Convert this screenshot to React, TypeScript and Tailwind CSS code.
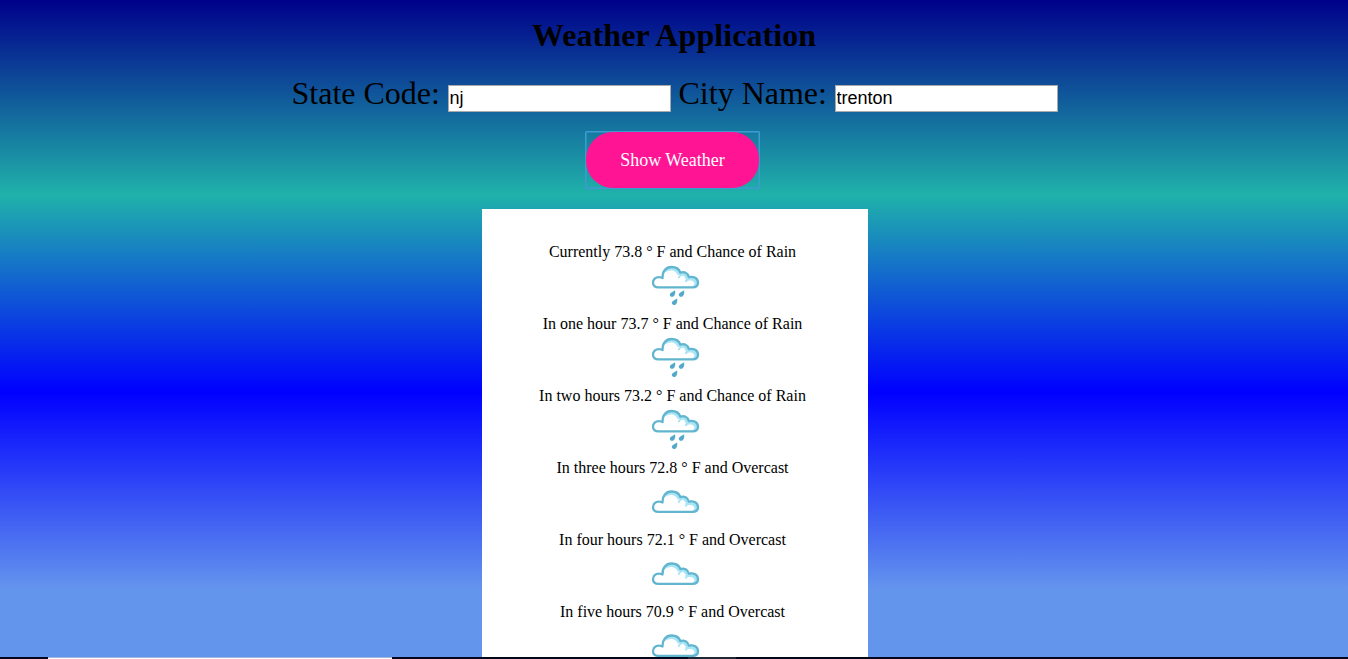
const forecast = [
  { text: "Currently 73.8 ° F and Chance of Rain", rain: true },
  { text: "In one hour 73.7 ° F and Chance of Rain", rain: true },
  { text: "In two hours 73.2 ° F and Chance of Rain", rain: true },
  { text: "In three hours 72.8 ° F and Overcast", rain: false },
  { text: "In four hours 72.1 ° F and Overcast", rain: false },
  { text: "In five hours 70.9 ° F and Overcast", rain: false },
];

function CloudIcon({ rain }: { rain: boolean }) {
  return (
    <svg width="50" height="50" viewBox="0 0 50 50" fill="none" className="block shrink-0">
      <g transform={rain ? "translate(0 0.8)" : "translate(0 9.3)"}>
        <path
          d="M8.5 24.6C4.8 24.6 3 22.8 3 20C3 16.6 5.5 14.3 9.2 14.4C10.2 14.4 11.5 14.8 12.5 15.2C12.2 8.5 16 4.2 21.5 4.2C26 4.2 29.2 6.6 30.3 9.8C34 8.3 38 10.2 38.8 14.3C44.5 13.3 48 16 48 20C48 22.9 46 24.6 42.5 24.6Z"
          fill="#fff"
        />
        <path
          d="M15 9C19 6 25.5 6 28 11.5C33 10.5 36 13 36.5 17.3C42 16 45 18 45 21C45 22.5 44 23.5 42.5 24H44C47.5 23 48 21 47 18.5C45.8 15.8 42 15 38 15.8C37.5 11 34 9.3 29.3 11C27 4.5 19 3.5 15 9Z"
          fill="#a9e5f4"
          stroke="#a9e5f4"
          strokeWidth="1.2"
        />
        <path d="M28.5 15.5C29.5 12.5 31.5 11.5 34 11.5M35.5 19C36.5 16.8 38.5 16 41 16.3" stroke="#a9e5f4" strokeWidth="2" />
        <path
          d="M8.5 24.6C4.8 24.6 3 22.8 3 20C3 16.6 5.5 14.3 9.2 14.4C10.2 14.4 11.5 14.8 12.5 15.2C12.2 8.5 16 4.2 21.5 4.2C26 4.2 29.2 6.6 30.3 9.8C34 8.3 38 10.2 38.8 14.3C44.5 13.3 48 16 48 20C48 22.9 46 24.6 42.5 24.6Z"
          stroke="#62b5cf"
          strokeWidth="2.3"
          strokeLinejoin="round"
        />
      </g>
      {rain && (
        <g fill="#54a9cb">
          <path d="M25.2 28.2V31.2C24.6 35.8 19.8 35.8 19.8 32.4C20 30.6 23 29.8 25.2 28.2Z" />
          <path d="M34.2 28.2V31.2C33.6 35.8 28.8 35.8 28.8 32.4C29 30.6 32 29.8 34.2 28.2Z" />
          <path d="M27.2 36.4V39.4C26.6 44 21.8 44 21.8 40.6C22 38.8 25 38 27.2 36.4Z" />
        </g>
      )}
    </svg>
  );
}

export default function App() {
  return (
    <div className="flex h-[659px] flex-col overflow-hidden bg-[linear-gradient(to_bottom,darkblue_0px,lightseagreen_195px,blue_392px,cornflowerblue_590px)] font-['Liberation_Serif',serif] text-black">
      <main className="flex h-[657px] shrink-0 flex-col items-center overflow-hidden">
        <h1 className="mt-[17px] h-9 text-[32px] leading-9 font-bold tracking-[0.06px]">Weather Application</h1>
        <form className="mt-6 flex h-[35px] w-[767px] items-start text-[32px] leading-[33px]">
          <label htmlFor="state" className="w-[157px] shrink-0 pl-px whitespace-nowrap">State Code:</label>
          <input
            id="state"
            defaultValue="nj"
            className="mt-2 h-[27px] w-[223px] border border-[#a9a9a9] bg-white px-px font-['Liberation_Sans',sans-serif] text-[18px] leading-5 outline-none"
          />
          <label htmlFor="city" className="ml-2 w-[156px] shrink-0 whitespace-nowrap">City Name:</label>
          <input
            id="city"
            defaultValue="trenton"
            className="mt-2 h-[27px] w-[223px] border border-[#a9a9a9] bg-white px-px font-['Liberation_Sans',sans-serif] text-[18px] leading-5 outline-none"
          />
        </form>
        <div className="mt-[19px] ml-[-3px] h-[58px] w-[175px] shrink-0 rounded-[1px] border border-[#3d9bd0] shadow-[inset_0_0_0_1px_#3d9bd088]">
          <button className="h-full w-full rounded-[27px] bg-[#ff1493] text-[18px] text-white">
            Show Weather
          </button>
        </div>
        <section className="mt-5 ml-[2px] flex w-[386px] shrink-0 flex-col bg-white pt-[34px] pb-6">
          {forecast.map(({ text, rain }) => (
            <div key={text} className="flex h-[72px] shrink-0 flex-col items-center">
              <p className="mr-[5px] h-[19px] text-[16px] leading-[17px] whitespace-nowrap">{text}</p>
              <CloudIcon rain={rain} />
            </div>
          ))}
        </section>
      </main>
      <footer className="flex h-0.5 shrink-0 bg-[#00071c]">
        <div className="ml-12 w-[344px] border-t border-[#9fb5de] bg-white" />
        <div className="ml-[296px] w-12 bg-[#202735]" />
      </footer>
    </div>
  );
}
